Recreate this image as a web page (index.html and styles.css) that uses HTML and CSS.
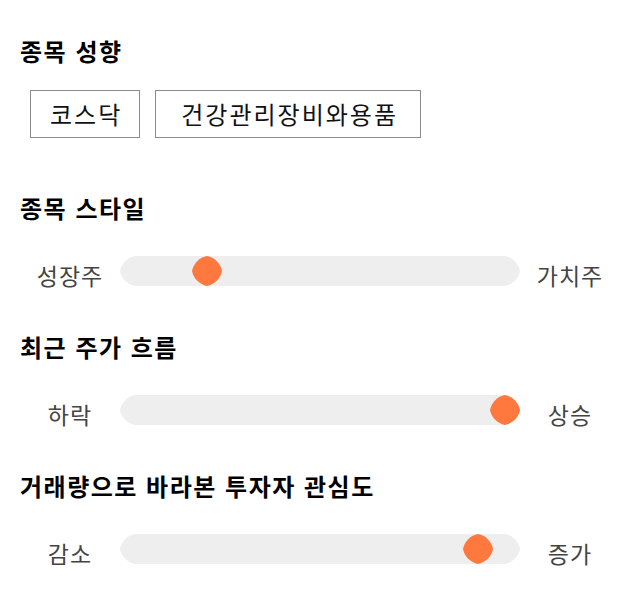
FILE: index.html
```html
<!DOCTYPE html>
<html lang="ko">
<head>
<meta charset="utf-8">
<link rel="stylesheet" href="styles.css">
</head>
<body>
<main class="page">
  <section class="section section-tags">
    <h2 class="title">종목 성향</h2>
    <div class="tags">
      <span class="tag">코스닥</span>
      <span class="tag tag-wide">건강관리장비와용품</span>
    </div>
  </section>

  <section class="section">
    <h2 class="title">종목 스타일</h2>
    <div class="slider-row">
      <span class="label">성장주</span>
      <div class="track">
        <svg class="thumb" style="--v:0.195" viewBox="0 0 30 30" width="30" height="30"><path d="M15 0A19 19 0 0 1 30 15A19 19 0 0 1 15 30A19 19 0 0 1 0 15A19 19 0 0 1 15 0Z"/></svg>
      </div>
      <span class="label">가치주</span>
    </div>
  </section>

  <section class="section">
    <h2 class="title">최근 주가 흐름</h2>
    <div class="slider-row">
      <span class="label">하락</span>
      <div class="track">
        <svg class="thumb" style="--v:1" viewBox="0 0 30 30" width="30" height="30"><path d="M15 0A19 19 0 0 1 30 15A19 19 0 0 1 15 30A19 19 0 0 1 0 15A19 19 0 0 1 15 0Z"/></svg>
      </div>
      <span class="label">상승</span>
    </div>
  </section>

  <section class="section">
    <h2 class="title">거래량으로 바라본 투자자 관심도</h2>
    <div class="slider-row">
      <span class="label">감소</span>
      <div class="track">
        <svg class="thumb" style="--v:0.927" viewBox="0 0 30 30" width="30" height="30"><path d="M15 0A19 19 0 0 1 30 15A19 19 0 0 1 15 30A19 19 0 0 1 0 15A19 19 0 0 1 15 0Z"/></svg>
      </div>
      <span class="label">증가</span>
    </div>
  </section>
</main>
</body>
</html>
```

FILE: styles.css
```css
* { box-sizing: border-box; }

html, body {
  margin: 0;
  background: #ffffff;
}

body {
  font-family: "Noto Sans CJK KR", "Noto Sans", sans-serif;
  color: #111111;
}

.page {
  padding: 34px 20px 0;
}

.section {
  padding-bottom: 44px;
}

.section-tags {
  padding-bottom: 53px;
}

.title {
  margin: 0;
  font-size: 24px;
  line-height: 34px;
  font-weight: 700;
  letter-spacing: 1.5px;
  color: #000000;
}

.tags {
  display: flex;
  gap: 15px;
  margin-top: 22px;
  padding-left: 10px;
}

.tag {
  display: block;
  height: 48px;
  padding: 0 17px 0 19px;
  border: 1px solid #8a8a8a;
  font-size: 24px;
  line-height: 46px;
  letter-spacing: 2px;
  color: #111111;
}

.tag-wide {
  padding: 0 22px 0 25px;
}

.slider-row {
  display: flex;
  align-items: center;
  margin-top: 31px;
  height: 30px;
}

.label {
  width: 100px;
  text-align: center;
  font-size: 23px;
  line-height: 30px;
  letter-spacing: 1px;
  color: #444444;
  padding-top: 8px;
}

.track {
  position: relative;
  width: 400px;
  height: 30px;
}

.track::before {
  content: "";
  position: absolute;
  inset: 0;
  background: #eeeeee;
  clip-path: path("M15 0H385A19 19 0 0 1 400 15A19 19 0 0 1 385 30H15A19 19 0 0 1 0 15A19 19 0 0 1 15 0Z");
}

.thumb {
  position: absolute;
  top: 0;
  left: calc((100% - 30px) * var(--v));
  fill: #ff783e;
  display: block;
}
```
